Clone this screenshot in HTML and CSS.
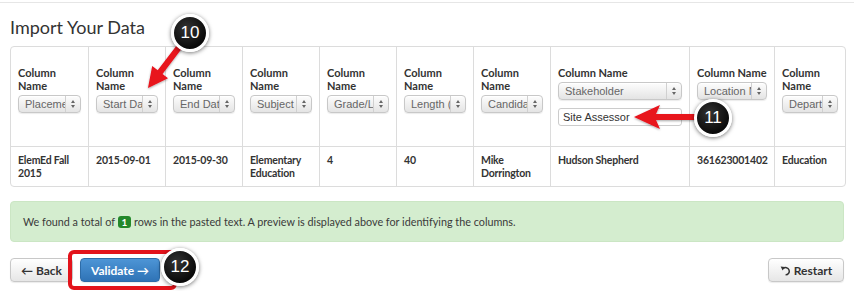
FILE: index.html
```html
<!DOCTYPE html>
<html lang="en">
<head>
    <meta charset="UTF-8">
    <meta name="viewport" content="width=device-width, initial-scale=1.0">
    <title>Import Your Data</title>
    <link rel="stylesheet" href="styles.css">
</head>
<body>
    <div class="topbar"></div>
    <div class="main">
        <h1>Import Your Data</h1>
        <table class="preview-table">
            <colgroup>
                <col style="width: 77px"><col style="width: 77px"><col style="width: 77px"><col style="width: 77px">
                <col style="width: 77px"><col style="width: 77px"><col style="width: 77px"><col style="width: 139px">
                <col style="width: 85px"><col style="width: 71px">
            </colgroup>
            <tr class="head-row">
                <td>Column Name<div class="select"><span class="select-text">Placement Name</span><span class="select-arrow"></span></div></td>
                <td>Column Name<div class="select"><span class="select-text">Start Date</span><span class="select-arrow"></span></div></td>
                <td>Column Name<div class="select"><span class="select-text">End Date</span><span class="select-arrow"></span></div></td>
                <td>Column Name<div class="select"><span class="select-text">Subject</span><span class="select-arrow"></span></div></td>
                <td>Column Name<div class="select"><span class="select-text">Grade/Level</span><span class="select-arrow"></span></div></td>
                <td>Column Name<div class="select"><span class="select-text">Length (Days)</span><span class="select-arrow"></span></div></td>
                <td>Column Name<div class="select"><span class="select-text">Candidate</span><span class="select-arrow"></span></div></td>
                <td>Column Name<div class="select"><span class="select-text">Stakeholder</span><span class="select-arrow"></span></div>
                    <div class="text-input">Site Assessor</div></td>
                <td>Column Name<div class="select"><span class="select-text">Location Number</span><span class="select-arrow"></span></div></td>
                <td>Column Name<div class="select"><span class="select-text">Department</span><span class="select-arrow"></span></div></td>
            </tr>
            <tr class="data-row">
                <td>ElemEd Fall 2015</td>
                <td>2015-09-01</td>
                <td>2015-09-30</td>
                <td>Elementary Education</td>
                <td>4</td>
                <td>40</td>
                <td>Mike Dorrington</td>
                <td>Hudson Shepherd</td>
                <td>361623001402</td>
                <td>Education</td>
            </tr>
        </table>

        <div class="alert">We found a total of <span class="badge">1</span> rows in the pasted text. A preview is displayed above for identifying the columns.</div>

        <div class="actions">
            <button class="btn">&larr; Back</button>
            <button class="btn btn-primary">Validate &rarr;</button>
            <button class="btn btn-restart"><svg class="undo-icon" width="11" height="11" viewBox="0 0 11 11"><path d="M3.2 3.6 A3.6 3.6 0 1 1 5.6 9.8" fill="none" stroke="#333" stroke-width="1.5"/><path d="M0.6 1.6 L4.8 1.9 L2.6 5.4 Z" fill="#333"/></svg>Restart</button>
        </div>
    </div>

    <!-- screenshot annotations -->
    <svg class="arrows" width="854" height="291" viewBox="0 0 854 291">
        <defs>
            <filter id="shade" x="-20%" y="-20%" width="140%" height="140%">
                <feDropShadow dx="0" dy="1" stdDeviation="1" flood-color="#000" flood-opacity="0.35"/>
            </filter>
        </defs>
        <polygon filter="url(#shade)" fill="#e8121c" points="148,88 168,78.2 162.5,73.9 182.4,47.8 177.6,44.2 157.7,70.3 152.2,66"/>
        <polygon filter="url(#shade)" fill="#e8121c" points="634,117 660,105 656,114 698,114 698,120 656,120 660,129"/>
    </svg>
    <div class="highlight"></div>
    <div class="callout callout-10">10</div>
    <div class="callout callout-11">11</div>
    <div class="callout callout-12">12</div>
</body>
</html>
```

FILE: styles.css
```css
body {
    margin: 0;
    font-family: Lato, "Open Sans", sans-serif;
    color: #333;
    background: #fff;
    position: relative;
    width: 854px;
    height: 291px;
    overflow: hidden;
}
.topbar {
    height: 2px;
    border-bottom: 1px solid #e6e6e6;
}
.main {
    padding: 0 10px;
}
h1 {
    font-size: 18px;
    font-weight: 400;
    line-height: 22px;
    margin: 13px 0 8px;
    color: #333;
}
.preview-table {
    width: 834px;
    table-layout: fixed;
    border-collapse: separate;
    border-spacing: 0;
    border: 1px solid #dcdcdc;
    border-radius: 4px;
    font-size: 11px;
    font-weight: 700;
    line-height: 13px;
    color: #333;
}
.preview-table td {
    vertical-align: top;
    border-left: 1px solid #dcdcdc;
    padding: 19px 7px 20px;
}
.preview-table td:first-child {
    border-left: none;
}
.data-row td {
    border-top: 1px solid #dcdcdc;
    padding: 7px 7px 6px;
    font-size: 10.5px;
    letter-spacing: -0.2px;
}
.select {
    display: flex;
    height: 18px;
    margin-top: 3px;
    border: 1px solid #c8c8c8;
    border-radius: 4px;
    box-sizing: border-box;
    background: linear-gradient(#fdfdfd, #e4e4e4);
    box-shadow: inset 0 1px 0 #fff, 0 1px 1px rgba(0,0,0,0.08);
    font-family: "Liberation Sans", Arial, sans-serif;
    font-weight: 400;
    font-size: 11px;
    line-height: 16px;
    color: #666;
    overflow: hidden;
}
.select-text {
    flex: 1;
    min-width: 0;
    padding-left: 6px;
    white-space: nowrap;
    overflow: hidden;
}
.select-arrow {
    width: 14px;
    flex: none;
    border-left: 1px solid #d0d0d0;
    position: relative;
}
.select-arrow::before,
.select-arrow::after {
    content: '';
    position: absolute;
    left: 5px;
    border-left: 2.5px solid transparent;
    border-right: 2.5px solid transparent;
}
.select-arrow::before {
    top: 4px;
    border-bottom: 3px solid #666;
}
.select-arrow::after {
    top: 9px;
    border-top: 3px solid #666;
}
.text-input {
    height: 18px;
    margin-top: 8px;
    border: 1px solid #ccc;
    border-radius: 3px;
    box-sizing: border-box;
    padding-left: 4px;
    font-family: "Liberation Sans", Arial, sans-serif;
    font-weight: 400;
    font-size: 11px;
    line-height: 16px;
    color: #333;
}
.alert {
    margin-top: 14px;
    height: 41px;
    box-sizing: border-box;
    background: #d4edcf;
    border: 1px solid #cbe6c4;
    border-radius: 4px;
    padding: 0 12px;
    font-size: 10.8px;
    line-height: 39px;
    color: #3a3a3a;
}
.badge {
    display: inline-block;
    background: #23882a;
    color: #fff;
    font-weight: 700;
    font-size: 10px;
    line-height: 12px;
    padding: 0 4px;
    border-radius: 3px;
    vertical-align: 0;
}
.actions {
    display: flex;
    gap: 7px;
    margin-top: 16px;
}
.btn {
    height: 24px;
    padding: 0 10px;
    border: 1px solid #c8c8c8;
    border-radius: 4px;
    background: linear-gradient(#fff, #e6e6e6);
    box-shadow: 0 1px 1px rgba(0,0,0,0.08);
    font-family: Lato, "Open Sans", sans-serif;
    font-size: 12px;
    font-weight: 700;
    color: #333;
    white-space: nowrap;
    display: flex;
    align-items: center;
    gap: 3px;
}
.btn-primary {
    width: 80px;
    padding: 0;
    justify-content: center;
    color: #fff;
    border-color: #2d6ca8;
    background: linear-gradient(#4d95d6, #2f73b6);
}
.btn-restart {
    margin-left: auto;
    width: 76px;
    padding: 0;
    justify-content: center;
}
.arrows {
    position: absolute;
    left: 0;
    top: 0;
    pointer-events: none;
}
.highlight {
    position: absolute;
    left: 68px;
    top: 250px;
    width: 101px;
    height: 32px;
    border: 4px solid #e3131b;
    border-radius: 6px;
}
.callout {
    position: absolute;
    width: 32px;
    height: 32px;
    border: 3px solid #fff;
    border-radius: 50%;
    background: radial-gradient(circle at 40% 35%, #333, #0a0a0a 70%);
    box-shadow: 0 1px 4px rgba(0,0,0,0.55);
    color: #fff;
    font-family: "Liberation Sans", Arial, sans-serif;
    font-size: 17px;
    line-height: 32px;
    text-align: center;
}
.callout-10 { left: 171px; top: 14px; }
.callout-11 { left: 694px; top: 99px; }
.callout-12 { left: 161px; top: 248px; }
```
